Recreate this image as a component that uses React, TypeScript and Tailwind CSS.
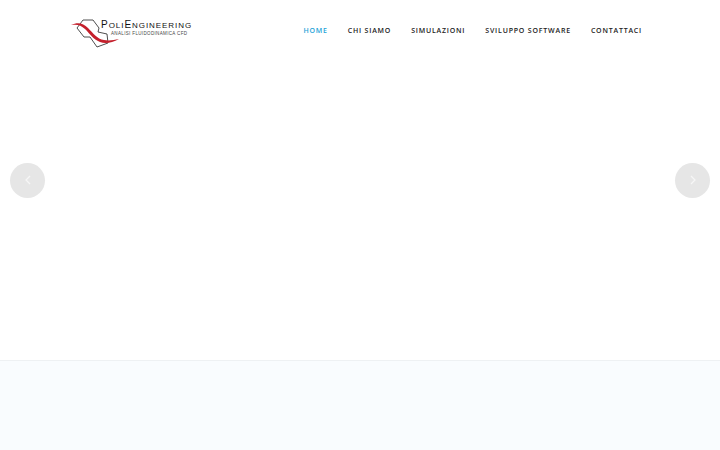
export default function App() {
  const links = ["CHI SIAMO", "SIMULAZIONI", "SVILUPPO SOFTWARE", "CONTATTACI"];
  return (
    <div className="w-[720px] h-[450px] overflow-hidden bg-white flex flex-col font-['Open_Sans',sans-serif]">
      <div className="relative h-[360px] shrink-0">
        <header className="h-[60px] flex items-center justify-between pl-[70px] pr-[78px]">
          <div className="flex items-center">
            <svg width="50" height="30" viewBox="70 18 50 30" className="shrink-0 -mr-[19px] mt-[6px]">
              <path d="M77 28 L83 20 L93 20 L99 28 L98 32 L107 34 L108 43 L97 47 L90 37 L84 37 Z" fill="none" stroke="#222" strokeWidth="0.8" strokeLinejoin="round" />
              <path d="M71 25 C78 22 83 23 88 28 C93 33 97 39 104 40 C109 41 114 40 119 39 C112 43 105 44 100 42 C93 39 90 34 85 29 C81 25 77 24 71 25 Z" fill="#c4202c" />
            </svg>
            <div className="flex flex-col items-start font-['Liberation_Sans',sans-serif] relative z-10 mt-[-4px]">
              <span className="text-[8px] leading-[10px] text-[#111] tracking-[0.95px] whitespace-nowrap">
                <span className="text-[10px]">P</span>OLI<span className="text-[10px]">E</span>NGINEERING
              </span>
              <span className="text-[4.5px] leading-[6px] text-[#444] tracking-[0.35px] ml-[10px] whitespace-nowrap">
                ANALISI FLUIDODINAMICA CFD
              </span>
            </div>
          </div>
          <nav className="flex items-center gap-5 text-[7px] leading-[12px] font-semibold tracking-[0.8px] text-[#222] mt-[2px]">
            <a className="text-[#1fa3d8]">HOME</a>
            {links.map((l) => (
              <a key={l} className="whitespace-nowrap">{l}</a>
            ))}
          </nav>
        </header>
        <button className="absolute left-[10px] top-[162.5px] w-[35px] h-[35px] rounded-full bg-[#e6e6e6] flex items-center justify-center">
          <svg width="8" height="10" viewBox="0 0 8 10" fill="none" stroke="#f6f6f6" strokeWidth="1.3">
            <path d="M6 1 L2 5 L6 9" />
          </svg>
        </button>
        <button className="absolute right-[10px] top-[162.5px] w-[35px] h-[35px] rounded-full bg-[#e6e6e6] flex items-center justify-center">
          <svg width="8" height="10" viewBox="0 0 8 10" fill="none" stroke="#f6f6f6" strokeWidth="1.3">
            <path d="M2 1 L6 5 L2 9" />
          </svg>
        </button>
      </div>
      <div className="flex-1 bg-[#f9fcfe] border-t border-[#eef1f3]" />
    </div>
  );
}
